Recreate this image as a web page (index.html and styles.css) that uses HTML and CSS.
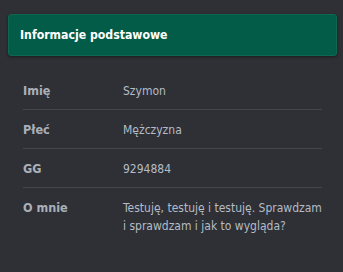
FILE: index.html
```html
<!DOCTYPE html>
<html lang="pl">
<head>
    <meta charset="UTF-8">
    <meta name="viewport" content="width=device-width, initial-scale=1.0">
    <title>Informacje podstawowe</title>
    <link rel="stylesheet" href="styles.css">
</head>
<body>
    <div class="profile-box">
        <div class="profile-header">Informacje podstawowe</div>

        <div class="profile-info">
            <div class="info-row">
                <div class="info-label">Imię</div>
                <div class="info-value">Szymon</div>
            </div>
            <div class="info-row">
                <div class="info-label">Płeć</div>
                <div class="info-value">Mężczyzna</div>
            </div>
            <div class="info-row">
                <div class="info-label">GG</div>
                <div class="info-value">9294884</div>
            </div>
            <div class="info-row last">
                <div class="info-label">O mnie</div>
                <div class="info-value">Testuję, testuję i testuję. Sprawdzam i sprawdzam i jak to wygląda?</div>
            </div>
        </div>
    </div>
</body>
</html>
```

FILE: styles.css
```css
body {
    background-color: #2e3035;
    color: #b4bcc7;
    font-family: "DejaVu Sans Condensed", "DejaVu Sans", sans-serif;
    font-size: 12px;
    margin: 0;
    padding: 0;
}

.profile-box {
    padding: 14px 6px 0 8px;
}

.profile-header {
    background-color: #035c48;
    border: 1px solid #0f6651;
    border-radius: 3px;
    box-shadow: 0 1px 3px rgba(0, 0, 0, 0.45);
    color: #fff;
    font-size: 12.2px;
    font-weight: bold;
    height: 40px;
    line-height: 40px;
    padding: 0 11px;
}

.profile-info {
    padding: 15px 15px 0;
}

.info-row {
    display: flex;
    border-bottom: 1px solid #44464c;
    padding: 11px 0 9px;
    line-height: 18px;
}

.info-row.last {
    border-bottom: none;
}

.info-label {
    width: 100px;
    flex-shrink: 0;
    color: #a9b0ba;
    font-size: 12.5px;
    font-weight: bold;
}

.info-value {
    flex: 1;
}
```
